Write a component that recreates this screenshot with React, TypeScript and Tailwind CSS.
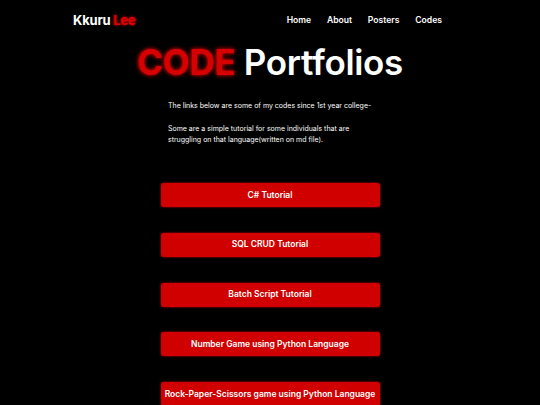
const links = [
  'C# Tutorial',
  'SQL CRUD Tutorial',
  'Batch Script Tutorial',
  'Number Game using Python Language',
  'Rock-Paper-Scissors game using Python Language',
];

export default function App() {
  return (
    <div className="min-h-screen bg-black text-white font-['Inter','Liberation_Sans',sans-serif]">
      <header className="w-[394px] mx-auto flex items-center justify-between pt-[12px] h-[29px]">
        <a className="text-[13px] font-bold tracking-[-0.2px]">
          Kkuru <span className="text-[#e00000] [text-shadow:0_0_3px_#ff0000]">Lee</span>
        </a>
        <nav className="flex gap-[15.8px] pr-[25px] text-[8.6px] font-semibold">
          <a>Home</a>
          <a>About</a>
          <a>Posters</a>
          <a>Codes</a>
        </nav>
      </header>

      <main className="flex flex-col items-center">
        <h1 className="mt-[10px] text-[35px] leading-[46px] font-semibold tracking-[-0.3px]">
          <span className="font-bold text-[#d60000] [text-shadow:0_0_4px_#ff0000]">CODE</span> Portfolios
        </h1>

        <div className="w-[204px] mt-[15px] text-[7px] leading-[11px] text-white">
          <p>The links below are some of my codes since 1st year college-</p>
          <p className="mt-[12px]">Some are a simple tutorial for some individuals that are struggling on that language(written on md file).</p>
        </div>

        <div className="mt-[38px] flex flex-col gap-[25.8px]">
          {links.map(label => (
            <a
              key={label}
              className="w-[219px] h-[24px] flex items-center justify-center rounded-[3px] bg-[#d10000] shadow-[0_0_2px_#ff0000] text-[8.5px] font-semibold whitespace-nowrap"
            >
              {label}
            </a>
          ))}
        </div>
      </main>
    </div>
  );
}
